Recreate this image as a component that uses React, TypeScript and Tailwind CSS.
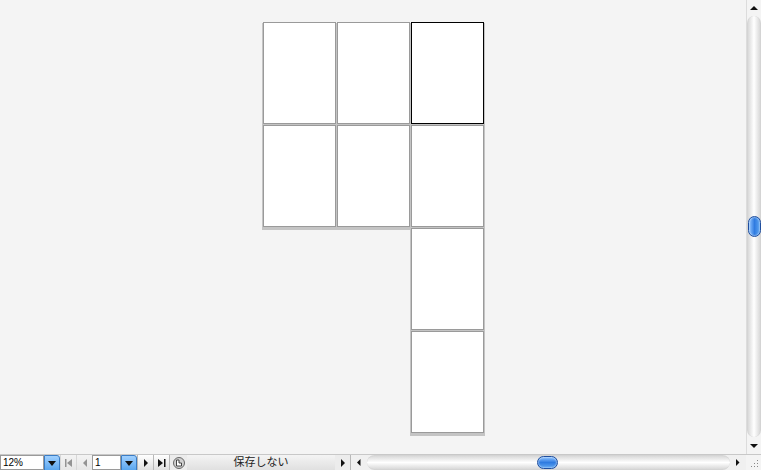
const Page = ({ active }: { active?: boolean }) => (
  <div
    className={`w-[73px] h-[102px] bg-white border shadow-[0_2px_0_1px_#c4c4c4] ${
      active ? 'border-black' : 'border-[#9a9a9a]'
    }`}
  />
);

const Blank = () => <div className="w-[73px] h-[102px]" />;

const Tri = ({ dir, size = 4 }: { dir: 'up' | 'down' | 'left' | 'right'; size?: number }) => {
  const s = size;
  const pts =
    dir === 'up'
      ? `0,${s} ${s},0 ${2 * s},${s}`
      : dir === 'down'
      ? `0,0 ${2 * s},0 ${s},${s}`
      : dir === 'left'
      ? `${s},0 ${s},${2 * s} 0,${s}`
      : `0,0 0,${2 * s} ${s},${s}`;
  const w = dir === 'up' || dir === 'down' ? 2 * s : s;
  const h = dir === 'up' || dir === 'down' ? s : 2 * s;
  return (
    <svg width={w} height={h} viewBox={`0 0 ${w} ${h}`}>
      <polygon points={pts} fill="#111" />
    </svg>
  );
};

const BlueDrop = () => (
  <div className="w-[16px] h-[16px] flex items-center justify-center border border-[#3a7cc4] rounded-tr-[3px] bg-gradient-to-b from-[#9fd0ff] to-[#5aa6ee]">
    <svg width="8" height="5" viewBox="0 0 8 5">
      <polygon points="0,0 8,0 4,5" fill="#111" />
    </svg>
  </div>
);

const NavBtn = ({ children, disabled }: { children: React.ReactNode; disabled?: boolean }) => (
  <div
    className={`w-[16px] h-[16px] flex items-center justify-center border-l border-[#b8b8b8] bg-gradient-to-b from-white to-[#dcdcdc] ${
      disabled ? 'opacity-40' : ''
    }`}
  >
    {children}
  </div>
);

const BlueThumb = ({ vertical }: { vertical?: boolean }) => (
  <div
    className={`${
      vertical ? 'w-[13px] h-[21px] bg-gradient-to-r' : 'w-[21px] h-[13px] bg-gradient-to-b'
    } rounded-full border border-[#1f4e9e] from-[#8cc2ff] via-[#2f7be0] to-[#5fa6f2] shadow-[inset_0_0_2px_#ffffff]`}
  />
);

export default function App() {
  return (
    <div className="w-[761px] h-[470px] flex flex-col bg-[#f4f4f4] overflow-hidden" style={{ fontFamily: '"Liberation Sans", "Noto Sans CJK JP", sans-serif' }}>
      <div className="flex flex-1 min-h-0">
        {/* canvas */}
        <div className="flex-1 flex justify-center pt-[22px]">
          <div className="flex flex-col gap-[1px]">
            <div className="flex gap-[1px]">
              <Page />
              <Page />
              <Page active />
            </div>
            <div className="flex gap-[1px]">
              <Page />
              <Page />
              <Page />
            </div>
            <div className="flex gap-[1px]">
              <Blank />
              <Blank />
              <Page />
            </div>
            <div className="flex gap-[1px]">
              <Blank />
              <Blank />
              <Page />
            </div>
          </div>
        </div>
        {/* vertical scrollbar */}
        <div className="w-[15px] flex flex-col items-center bg-[#f4f4f4] border-l border-[#dcdcdc]">
          <div className="h-[16px] flex items-center justify-center">
            <Tri dir="up" />
          </div>
          <div className="flex-1 w-[14px] rounded-t-full rounded-b-full bg-gradient-to-r from-[#d9d9d9] via-white to-[#d9d9d9] border-x border-[#d4d4d4] flex flex-col items-center pt-[200px]">
            <BlueThumb vertical />
          </div>
          <div className="h-[17px] flex items-center justify-center">
            <Tri dir="down" />
          </div>
        </div>
      </div>
      {/* bottom bar */}
      <div className="h-[16px] flex items-stretch bg-[#ececec] border-t border-[#c8c8c8] text-[10px] leading-none">
        <div className="w-[44px] bg-white border border-[#9a9a9a] flex items-center pl-[2px] text-black">12%</div>
        <BlueDrop />
        <NavBtn disabled>
          <svg width="8" height="8" viewBox="0 0 8 8">
            <rect x="0" y="0" width="1.5" height="8" fill="#111" />
            <polygon points="7,0 7,8 2,4" fill="#111" />
          </svg>
        </NavBtn>
        <NavBtn disabled>
          <Tri dir="left" />
        </NavBtn>
        <div className="w-[29px] bg-white border border-[#9a9a9a] flex items-center pl-[2px] text-black">1</div>
        <BlueDrop />
        <NavBtn>
          <Tri dir="right" />
        </NavBtn>
        <NavBtn>
          <svg width="8" height="8" viewBox="0 0 8 8">
            <polygon points="0,0 0,8 5,4" fill="#111" />
            <rect x="6" y="0" width="1.5" height="8" fill="#111" />
          </svg>
        </NavBtn>
        <div className="w-[18px] flex items-center justify-center border-l border-[#b8b8b8]">
          <svg width="12" height="12" viewBox="0 0 12 12">
            <circle cx="6" cy="6" r="5.5" fill="#d0d0d0" stroke="#666" />
            <path d="M3.5 3 L3.5 9 L8.5 9 L8.5 6 L6 6 L6 3 Z" fill="#fff" stroke="#333" strokeWidth="0.9" />
          </svg>
        </div>
        <div className="w-[148px] flex items-center justify-center text-[11px] text-[#222] bg-gradient-to-b from-[#f4f4f4] to-[#e0e0e0]">保存しない</div>
        <div className="w-[15px] flex items-center justify-center">
          <Tri dir="right" />
        </div>
        <div className="flex-1 flex items-center border-l border-[#b8b8b8] bg-[#f0f0f0]">
          <div className="w-[16px] flex items-center justify-center">
            <Tri dir="left" size={3.5} />
          </div>
          <div className="flex-1 h-[15px] rounded-full bg-gradient-to-b from-[#d9d9d9] via-white to-[#d9d9d9] border-y border-[#d4d4d4] flex items-center pl-[170px]">
            <BlueThumb />
          </div>
          <div className="w-[16px] flex items-center justify-center">
            <Tri dir="right" size={3.5} />
          </div>
        </div>
        <div className="w-[15px] flex items-end justify-end pr-[2px] pb-[2px] bg-[#f4f4f4]">
          <svg width="9" height="9" viewBox="0 0 9 9">
            {[
              [7, 1], [7, 4], [7, 7], [4, 4], [4, 7], [1, 7],
            ].map(([x, y], i) => (
              <rect key={i} x={x} y={y} width="1" height="1" fill="#888" />
            ))}
          </svg>
        </div>
      </div>
    </div>
  );
}
